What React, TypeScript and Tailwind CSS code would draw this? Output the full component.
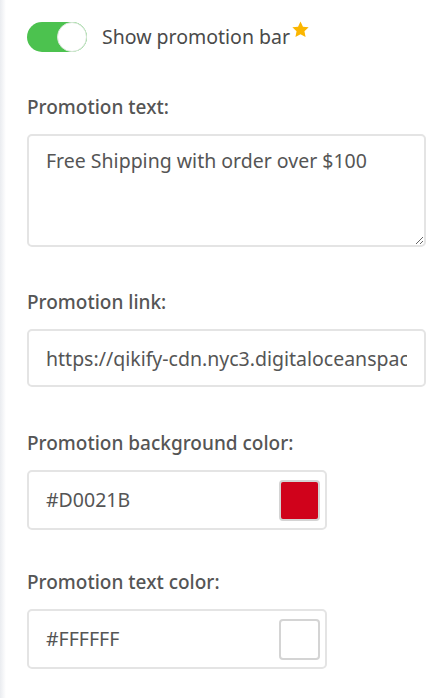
import React from 'react';

const font = { fontFamily: '"Noto Sans", "Open Sans", sans-serif' };

function Star() {
  return (
    <svg viewBox="0 0 24 24" className="w-[19px] h-[19px] -mt-[15px] ml-[1px]" fill="#fbb600">
      <path d="M12 1.8l3.1 6.6 7.2.9-5.3 5 1.4 7.1L12 17.9l-6.4 3.5 1.4-7.1-5.3-5 7.2-.9z" />
    </svg>
  );
}

function Label({ children }: { children: React.ReactNode }) {
  return <p className="text-[19px] leading-[28px] font-medium text-[#555555] mb-[13px]">{children}</p>;
}

function ColorField({ value, swatch }: { value: string; swatch: string }) {
  return (
    <div className="w-[300px] h-[60px] flex items-center justify-between border-2 border-[#e4e4e4] rounded-[5px] pl-[17px] pr-[5px]">
      <span className="text-[19.5px] text-[#555555]">{value}</span>
      <div className="w-[41px] h-[41px] rounded-[4px] border-2 border-[#d4d4d4]" style={{ backgroundColor: swatch }} />
    </div>
  );
}

export default function App() {
  return (
    <div className="flex w-[439px] h-[698px] bg-white overflow-hidden" style={font}>
      <div className="w-[6px] bg-gradient-to-r from-[#eaecf0] to-white" />
      <div className="flex-1 pl-[21px] pr-[13px] pt-[22px]">
        <div className="flex items-center gap-[15px]">
          <button className="relative w-[60px] h-[30px] rounded-full bg-[#4cc24f]">
            <span className="absolute right-0 top-0 w-[30px] h-[30px] rounded-full bg-white border border-[#d9e6d9]" />
          </button>
          <div className="flex items-center">
            <span className="text-[19.5px] text-[#4a4a4a]">Show promotion bar</span>
            <Star />
          </div>
        </div>

        <div className="mt-[41px]">
          <Label>Promotion text:</Label>
          <textarea
            className="block w-full h-[113px] border-2 border-[#e4e4e4] rounded-[5px] px-[17px] pt-[11px] text-[19.5px] leading-[28px] text-[#555555] outline-none"
            defaultValue="Free Shipping with order over $100"
          />
        </div>

        <div className="mt-[41px]">
          <Label>Promotion link:</Label>
          <input
            className="block w-full h-[58px] border-2 border-[#e4e4e4] rounded-[5px] px-[17px] text-[19.5px] text-[#555555] outline-none"
            defaultValue="https://qikify-cdn.nyc3.digitaloceanspaces.com/promotion"
          />
        </div>

        <div className="mt-[42px]">
          <Label>Promotion background color:</Label>
          <ColorField value="#D0021B" swatch="#d0021b" />
        </div>

        <div className="mt-[38px]">
          <Label>Promotion text color:</Label>
          <ColorField value="#FFFFFF" swatch="#ffffff" />
        </div>
      </div>
    </div>
  );
}
